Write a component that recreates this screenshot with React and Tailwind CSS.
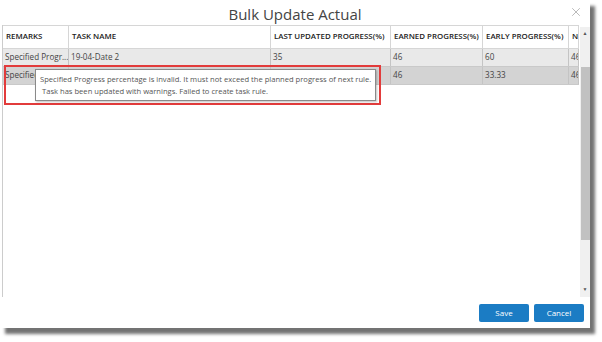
import { X } from 'lucide-react';

const cols = [
    { label: 'REMARKS', w: 'w-[66px]' },
    { label: 'TASK NAME', w: 'w-[202px]' },
    { label: 'LAST UPDATED PROGRESS(%)', w: 'w-[120px]' },
    { label: 'EARNED PROGRESS(%)', w: 'w-[92px]' },
    { label: 'EARLY PROGRESS(%)', w: 'w-[86px]' },
    { label: 'N', w: 'w-[10px]' },
];

const rows = [
    { bg: 'bg-[#e9e9e9]', cells: ['Specified Progr...', '19-04-Date 2', '35', '46', '60', '46'] },
    { bg: 'bg-[#d3d3d3]', cells: ['Specified Progr...', '19-04-Date 2', '35', '46', '33.33', '46'] },
];

const App = () => {
    return (
        <div className="w-[602px] h-[342px] bg-white font-['Open_Sans',sans-serif] text-[#333]">
            <div className="relative w-[590px] h-[328px] bg-white shadow-[5px_6px_3px_rgba(0,0,0,0.55)] flex flex-col">
                {/* Title */}
                <div className="h-[25px] flex items-center justify-center relative">
                    <h1 className="text-[15px] text-[#444] leading-none mt-[3px]">Bulk Update Actual</h1>
                    <X size={14} strokeWidth={1} className="absolute right-[7px] top-[5px] text-[#888]" />
                </div>

                {/* Grid */}
                <div className="relative flex ml-[2px] h-[272px] border-l border-[#ccc]">
                    <div className="w-[577px] overflow-hidden">
                        <div className="flex h-[24px] border-y border-[#d6d6d6] bg-white">
                            {cols.map((c, i) => (
                                <div key={i} className={`${c.w} shrink-0 border-r border-[#d6d6d6] px-[3px] flex items-center text-[7.9px] font-semibold text-[#222] whitespace-nowrap overflow-hidden`}>
                                    {c.label}
                                </div>
                            ))}
                        </div>
                        {rows.map((r, ri) => (
                            <div key={ri} className={`flex h-[18px] border-b border-[#c9c9c9] ${r.bg}`}>
                                {r.cells.map((v, i) => (
                                    <div key={i} className={`${cols[i].w} shrink-0 border-r border-[#c4c4c4] pl-[2px] pr-[1px] flex items-center text-[8.1px] text-[#444] whitespace-nowrap overflow-hidden`}>
                                        {v}
                                    </div>
                                ))}
                            </div>
                        ))}
                    </div>

                    {/* Scrollbar */}
                    <div className="w-[10px] ml-[1px] mt-[2px] bg-[#f0f0f0] flex flex-col items-center">
                        <div className="h-[14px] flex items-center justify-center text-[5px] text-[#555]">▲</div>
                        <div className="w-[9px] h-[173px] mt-[26px] bg-[#c1c1c1]" />
                        <div className="flex-1" />
                        <div className="h-[14px] flex items-center justify-center text-[5px] text-[#555]">▼</div>
                    </div>

                    {/* Tooltip with highlight */}
                    <div className="absolute left-[1px] top-[40px] w-[377px] h-[40px] border-2 border-[#e23b3b]">
                        <div className="absolute left-[29px] top-[2px] w-[341px] h-[32px] bg-white border border-[#8a8a8a] shadow-[1px_1px_2px_rgba(0,0,0,0.25)] px-[4px] flex flex-col justify-center text-[7.6px] leading-[12px] text-[#555] whitespace-nowrap">
                            <span>Specified Progress percentage is invalid. It must not exceed the planned progress of next rule.</span>
                            <span className="pl-[2px]">Task has been updated with warnings. Failed to create task rule.</span>
                        </div>
                    </div>
                </div>

                {/* Footer */}
                <div className="flex justify-end gap-[5px] pr-[6px] pt-[7px]">
                    <button className="w-[50px] h-[18px] bg-[#1b7cc4] rounded-[2px] text-white text-[8px]">Save</button>
                    <button className="w-[50px] h-[18px] bg-[#1b7cc4] rounded-[2px] text-white text-[8px]">Cancel</button>
                </div>
            </div>
        </div>
    );
};

export default App;
